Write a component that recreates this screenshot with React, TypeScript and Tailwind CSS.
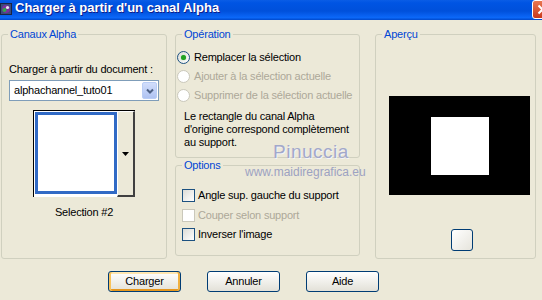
import React from "react";

const ui = "font-['Liberation_Sans',Arial,sans-serif] text-[11px] leading-[13px] tracking-[-0.2px] text-black whitespace-nowrap";

function Radio({ checked = false, disabled = false }: { checked?: boolean; disabled?: boolean }) {
  return (
    <span
      className={
        disabled
          ? "flex h-[13px] w-[13px] shrink-0 items-center justify-center rounded-full border border-[#CAC8BB] bg-white"
          : "flex h-[13px] w-[13px] shrink-0 items-center justify-center rounded-full border border-[#1C5180] bg-linear-to-br from-[#DCDCD7] to-white"
      }
    >
      {checked && <span className="h-[5px] w-[5px] rounded-full bg-[#21A121] shadow-[0_0_1px_#5ECB5E]" />}
    </span>
  );
}

function Check({ disabled = false }: { disabled?: boolean }) {
  return (
    <span
      className={
        disabled
          ? "h-[13px] w-[13px] shrink-0 border border-[#CAC8BB] bg-white"
          : "h-[13px] w-[13px] shrink-0 border border-[#1C5180] bg-linear-to-br from-[#DCDCD7] to-white"
      }
    />
  );
}

function Group({ title, className, children }: { title: string; className: string; children: React.ReactNode }) {
  return (
    <fieldset className={`rounded-[3px] border border-[#D0D0BF] ${className}`}>
      <legend className="ml-[6px] px-[2px] text-[#0046D5]">{title}</legend>
      {children}
    </fieldset>
  );
}

function XpButton({ label, isDefault = false }: { label: string; isDefault?: boolean }) {
  return (
    <button
      className={
        isDefault
          ? "flex h-[21px] w-[73px] items-center justify-center rounded-[3px] border border-[#003C74] bg-linear-to-b from-white to-[#E3E1D8] shadow-[inset_2px_0_0_#F9C25A,inset_-2px_0_0_#F0B040,inset_0_-2px_0_#E5971F,inset_0_2px_0_#FFE6B0]"
          : "flex h-[21px] w-[73px] items-center justify-center rounded-[3px] border border-[#003C74] bg-linear-to-b from-white to-[#E3E1D8]"
      }
    >
      {label}
    </button>
  );
}

export default function App() {
  return (
    <div className={`relative h-[300px] w-[542px] overflow-hidden bg-[#ECE9D8] ${ui}`}>
      {/* title bar */}
      <div className="flex h-[20px] items-start bg-[linear-gradient(to_bottom,#0A5DE6_0%,#0054E3_15%,#0050DB_55%,#0860F0_78%,#0B68F8_88%,#0048CC_100%)]">
        <svg width="12" height="12" viewBox="0 0 12 12" className="mt-[3px] shrink-0">
          <rect x="0" y="0" width="12" height="12" fill="#1B2340" />
          <rect x="1" y="1" width="10" height="10" fill="#3A4C7A" />
          <circle cx="6" cy="6" r="4" fill="#7A2E9E" />
          <circle cx="4.5" cy="7" r="2" fill="#2FA84A" />
          <circle cx="7.5" cy="4.5" r="1.6" fill="#E8E8F0" />
        </svg>
        <span className="ml-[3px] font-['Liberation_Sans',Arial,sans-serif] text-[13px] leading-[16px] font-bold tracking-normal text-white [text-shadow:1px_1px_0_#0F1E8A]">
          Charger à partir d'un canal Alpha
        </span>
        <div className="ml-auto -mr-[11px] flex h-[19px] w-[21px] shrink-0 items-center justify-center rounded-[3px] border border-white bg-linear-to-b from-[#E8764F] to-[#C9381B]">
          <svg width="11" height="11" viewBox="0 0 11 11">
            <path d="M1.5 1.5 L9.5 9.5 M9.5 1.5 L1.5 9.5" stroke="#fff" strokeWidth="2" />
          </svg>
        </div>
      </div>

      {/* main area */}
      <div className="flex items-start pt-[8px]">
        <Group title="Canaux Alpha" className="ml-[1px] h-[231px] w-[166px] shrink-0">
          <div className="flex flex-col pl-[7px] pt-[22px]">
            <span>Charger à partir du document :</span>
            <div className="mt-[4px] flex h-[21px] w-[150px] items-center border border-[#7F9DB9] bg-white">
              <span className="flex-1 pl-[4px]">alphachannel_tuto01</span>
              <span className="mr-[1px] flex h-[17px] w-[15px] items-center justify-center rounded-[2px] border border-[#B9CDF5] bg-linear-to-b from-[#D2DEFB] to-[#AFC3F2]">
                <svg width="8" height="6" viewBox="0 0 8 6">
                  <path d="M1 1.5 L4 4.5 L7 1.5" fill="none" stroke="#4D6185" strokeWidth="2" />
                </svg>
              </span>
            </div>
            <div className="ml-[24px] mt-[9px] flex h-[87px] w-[102px] border-l border-t border-black bg-white">
              <div className="flex flex-1 items-start pl-[1px] pt-[1px]">
                <div className="h-[82px] w-[82px] border-[3px] border-[#316AC5] bg-white" />
              </div>
              <div className="flex h-[86px] w-[18px] items-center justify-center border-b-2 border-r-2 border-l border-t border-b-[#404040] border-r-[#404040] border-l-white border-t-white bg-[#ECE9D8]">
                <svg width="7" height="4" viewBox="0 0 7 4">
                  <path d="M0 0 H7 L3.5 4 Z" fill="#000" />
                </svg>
              </div>
            </div>
            <span className="mt-[9px] w-[150px] text-center">Selection #2</span>
          </div>
        </Group>

        <div className="ml-[8px] flex w-[185px] shrink-0 flex-col">
          <Group title="Opération" className="h-[130px] w-[185px]">
            <div className="flex flex-col pl-[1px] pt-[7px]">
              <div className="flex h-[19px] items-center gap-[4px]">
                <Radio checked />
                <span>Remplacer la sélection</span>
              </div>
              <div className="flex h-[19px] items-center gap-[4px] text-[#ACA899]">
                <Radio disabled />
                <span>Ajouter à la sélection actuelle</span>
              </div>
              <div className="flex h-[19px] items-center gap-[4px] text-[#ACA899]">
                <Radio disabled />
                <span>Supprimer de la sélection actuelle</span>
              </div>
              <p className="mt-[5px] pl-[7px]">
                Le rectangle du canal Alpha
                <br />
                d'origine correspond complètement
                <br />
                au support.
              </p>
            </div>
          </Group>
          <Group title="Options" className="mt-[1px] h-[97px] w-[185px]">
            <div className="flex flex-col pl-[6px] pt-[17px]">
              <div className="flex h-[13px] items-center gap-[3px]">
                <Check />
                <span>Angle sup. gauche du support</span>
              </div>
              <div className="mt-[7px] flex h-[13px] items-center gap-[3px] text-[#ACA899]">
                <Check disabled />
                <span>Couper selon support</span>
              </div>
              <div className="mt-[6px] flex h-[13px] items-center gap-[3px]">
                <Check />
                <span>Inverser l'image</span>
              </div>
            </div>
          </Group>
        </div>

        <Group title="Aperçu" className="ml-[15px] h-[231px] w-[161px] shrink-0">
          <div className="flex flex-col items-start pl-[13px] pt-[55px]">
            <div className="flex h-[99px] w-[141px] items-center justify-center bg-black">
              <div className="h-[58px] w-[58px] bg-white" />
            </div>
            <div className="ml-[62px] mt-[34px] h-[22px] w-[22px] rounded-[3px] border border-[#003C74] bg-linear-to-br from-white to-[#E6E4DC]" />
          </div>
        </Group>
      </div>

      {/* buttons */}
      <div className="mt-[12px] flex gap-[26px] pl-[108px]">
        <XpButton label="Charger" isDefault />
        <XpButton label="Annuler" />
        <XpButton label="Aide" />
      </div>

      {/* watermark */}
      <span className="absolute left-[273px] top-[142px] font-['Liberation_Sans',Arial,sans-serif] text-[19px] leading-[19px] tracking-[0.5px] text-[#A2A8CA] [text-shadow:1px_1px_0_#F4F4F8]">
        Pinuccia
      </span>
      <span className="absolute left-[245px] top-[166px] font-['Liberation_Sans',Arial,sans-serif] text-[12px] leading-[12px] tracking-normal text-[#9CA2C2]">
        www.maidiregrafica.eu
      </span>
    </div>
  );
}
